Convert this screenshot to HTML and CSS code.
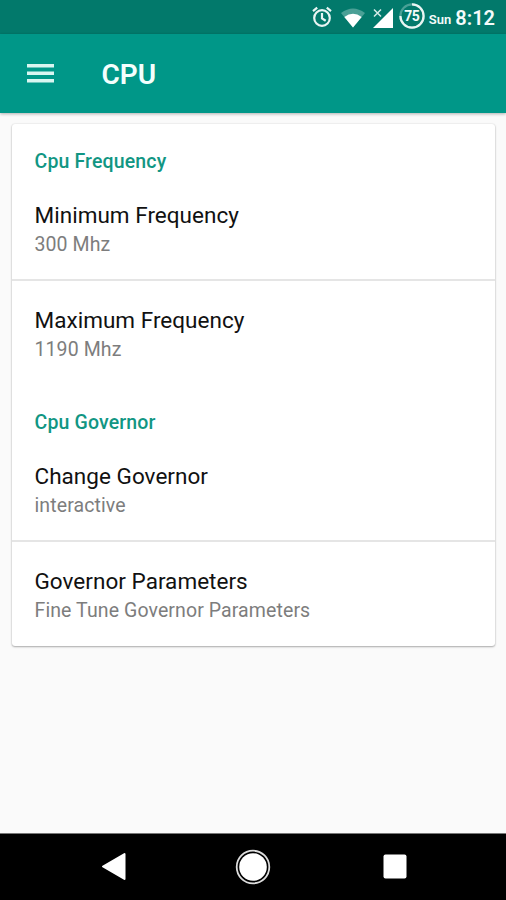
FILE: index.html
```html
<!DOCTYPE html>
<html lang="en">
<head>
<meta charset="utf-8">
<title>CPU</title>
<link rel="stylesheet" href="styles.css">
</head>
<body>
<div class="screen">
  <header class="status">
    <svg class="alarm" width="20" height="22" viewBox="0 0 20 22" fill="none" stroke="#e8f5f3" stroke-width="2.2">
      <circle cx="10" cy="12" r="7.8"/><path d="M10 7v5.4l3.7 2.3M1 5.2l4.2-3.5M19 5.2l-4.2-3.5"/>
    </svg>
    <svg class="wifi" width="24" height="20" viewBox="0 0 24 20">
      <path d="M0 5Q12-4 24 5L12 19.5Z" fill="#4aa096"/><path d="M3.3 9Q12 2.5 20.7 9L12 19.5Z" fill="#fff"/>
    </svg>
    <svg class="signal" width="20" height="20" viewBox="0 0 20 20">
      <path d="M20 0v20H0Z" fill="#fff"/><path d="M1 1.5l7 7M8 1.5l-7 7" stroke="#d5ebe8" stroke-width="1.5"/>
    </svg>
    <div class="battery">
      <svg width="26" height="26" viewBox="0 0 26 26" fill="none" stroke-width="2.2">
        <circle cx="13" cy="13" r="11.6" stroke="#4aa096"/><path d="M13 1.4A11.6 11.6 0 1 1 1.4 13" stroke="#e8f5f3"/>
      </svg>
      <span class="level">75</span>
    </div>
    <span class="day">Sun</span>
    <span class="time">8:12</span>
  </header>
  <div class="appbar">
    <svg class="menu" width="27" height="19" viewBox="0 0 27 19" fill="#d9f6f1">
      <path d="M0 0h27v3.5H0zM0 7.5h27v3.5H0zM0 15h27v3.5H0z"/>
    </svg>
    <h1 class="title">CPU</h1>
  </div>
  <main class="content">
    <div class="card">
      <section class="group">
        <h2 class="heading">Cpu Frequency</h2>
        <div class="item"><div class="name">Minimum Frequency</div><div class="value">300 Mhz</div></div>
        <div class="item"><div class="name">Maximum Frequency</div><div class="value">1190 Mhz</div></div>
      </section>
      <section class="group">
        <h2 class="heading">Cpu Governor</h2>
        <div class="item"><div class="name">Change Governor</div><div class="value">interactive</div></div>
        <div class="item"><div class="name">Governor Parameters</div><div class="value">Fine Tune Governor Parameters</div></div>
      </section>
    </div>
  </main>
  <nav class="nav">
    <svg width="25" height="29" viewBox="0 0 25 29"><path d="M2 14.5L23.5 2v25Z" fill="#fff" stroke="#fff" stroke-width="2" stroke-linejoin="round"/></svg>
    <svg class="home" width="36" height="36" viewBox="0 0 36 36"><circle cx="18" cy="18" r="16.3" fill="none" stroke="#ddd" stroke-width="1.8"/><circle cx="18" cy="18" r="13.8" fill="#fff"/></svg>
    <svg width="24" height="25" viewBox="0 0 24 25"><rect x=".5" y=".5" width="23" height="24" rx="2" fill="#fff"/></svg>
  </nav>
</div>
</body>
</html>
```
FILE: styles.css
```css
* { box-sizing: border-box; }
body { margin: 0; font-family: Roboto, sans-serif; }
.screen { width: 506px; height: 900px; display: flex; flex-direction: column; background: #fafafa; }
svg { display: block; flex: none; }
.status { height: 34px; background: #02796b; display: flex; align-items: center; padding: 0 11px 1px 0; justify-content: flex-end; color: #f4fbfa; }
.alarm { margin: 1px 9px 0 0; }
.wifi { margin: 2px 8px 0 0; }
.signal { margin: 2px 6px 0 0; }
.battery { display: grid; place-items: center; margin: -1px 4px 0 0; }
.battery > * { grid-area: 1 / 1; }
.level { font-size: 14px; font-weight: 700; letter-spacing: -.5px; }
.day { font-size: 13px; font-weight: 600; margin: 6px 4px 0 0; }
.time { font-size: 20px; font-weight: 600; margin-top: 3px; }
.appbar { height: 79px; background: #009788; display: flex; align-items: center; padding-left: 26.5px; box-shadow: 0 1px 3px rgba(0, 0, 0, .3); }
.menu { margin-top: -1px; }
.title { margin: 2px 0 0 48px; font-size: 28px; line-height: 34px; font-weight: 600; color: #f4fffd; }
.content { flex: 1; padding: 11px 11px 0 11.5px; }
.card { height: 521.5px; background: #fff; border-radius: 3px; box-shadow: 0 1px 2px rgba(0, 0, 0, .3), 0 0 2px rgba(0, 0, 0, .12); }
.heading { margin: 0; padding: 26px 23px 0; height: 52px; font-size: 19.5px; line-height: 24px; letter-spacing: .15px; font-weight: 500; color: #119683; }
.item { height: 104px; padding: 25px 23px 0; }
.group .heading + .item { height: 105px; border-bottom: 2px solid #e5e5e5; }
.name { font-size: 22.5px; line-height: 28px; letter-spacing: .03px; color: #111; }
.value { font-size: 19.5px; line-height: 24px; letter-spacing: .1px; margin-top: 4px; color: #7d7d7d; }
.nav { height: 67px; background: #000; border-top: 1px solid #777; display: flex; align-items: center; justify-content: space-between; padding: 0 99px 1px 101px; }
.home { margin: 0 1.5px 0 -1.5px; }
```
